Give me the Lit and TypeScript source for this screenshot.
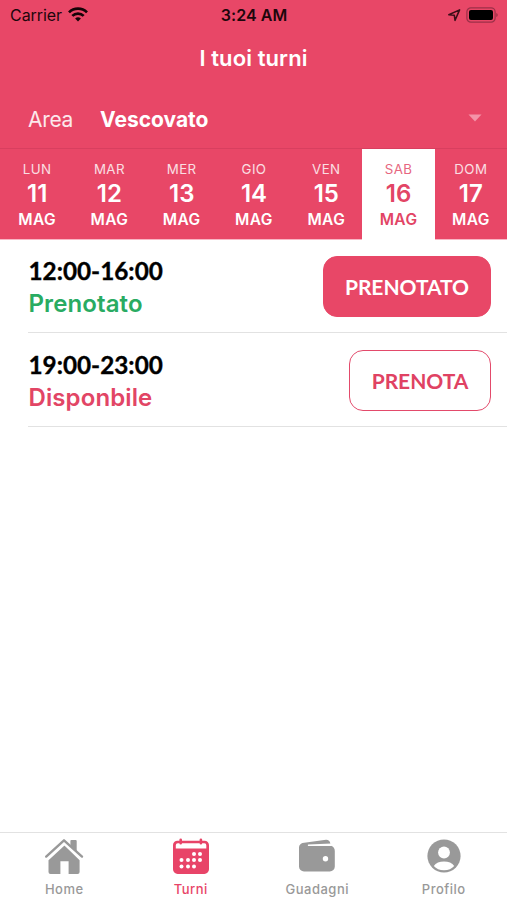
import { LitElement, html, css, svg } from "lit";
import { customElement, property } from "lit/decorators.js";
import { classMap } from "lit/directives/class-map.js";

const days = [
  { name: "LUN", num: 11 },
  { name: "MAR", num: 12 },
  { name: "MER", num: 13 },
  { name: "GIO", num: 14 },
  { name: "VEN", num: 15 },
  { name: "SAB", num: 16, selected: true },
  { name: "DOM", num: 17 },
];

const shifts = [
  { time: "12:00-16:00", status: "Prenotato", booked: true, action: "PRENOTATO" },
  { time: "19:00-23:00", status: "Disponbile", booked: false, action: "PRENOTA" },
];

const dots = [
  [23, 15], [29, 15],
  [10.5, 21], [17, 21], [23, 21], [29, 21],
  [10.5, 27.5], [17, 27.5], [23, 27.5],
];

const icons = {
  home: svg`
    <path d="M3.5 21.2 19.5 6.4 34.6 21.2V32.9a2 2 0 0 1-2 2H23.6V22.3H15.4V34.9H5.5a2 2 0 0 1-2-2Z"/>
    <path d="M.9 17.9 18.9 1.5 37 17.9" fill="none" stroke="#fff" stroke-width="3.6" transform="translate(0 2)"/>
    <path d="M1.2 17.6 19 1.3 37 17.6" fill="none" stroke="currentColor" stroke-width="2.4" stroke-linecap="round" stroke-linejoin="round"/>
    <path d="M25.4 2.1a1 1 0 0 1 1-1H30.7a1 1 0 0 1 1 1V12.5L25.4 7Z"/>`,
  calendar: svg`
    <path fill-rule="evenodd" d="M6 1.7H7.4V.7a1.3 1.3 0 0 1 2.6 0v1H27.6V.7a1.3 1.3 0 0 1 2.6 0v1H32.6A4.4 4.4 0 0 1 37 6.1V30.3a4.6 4.6 0 0 1-4.6 4.6H5.6A4.6 4.6 0 0 1 1 30.3V6.1A4.4 4.4 0 0 1 6 1.7ZM5.8 4.3A2 2 0 0 0 3.8 6.3V9.5H34.3V6.3A2 2 0 0 0 32.3 4.3H30.2a1.3 1.3 0 0 1-2.6 0H10a1.3 1.3 0 0 1-2.6 0Z"/>
    ${dots.map(([x, y]) => svg`<circle cx=${x - 1} cy=${y} r="2" fill="#fff"/>`)}`,
  wallet: svg`
    <path d="M1 8.5A5 5 0 0 1 4.4 4.1L28 .7A4 4 0 0 1 32.3 4.6L33 6.8A5.5 5.5 0 0 1 36.8 12V27.4A5 5 0 0 1 31.8 32.4H6A5 5 0 0 1 1 27.4Z"/>
    <path d="M10.2 5.4 33.6 4.5V6.9H11.2A.9.9 0 0 1 10.2 5.4Z" fill="#fff"/>
    <circle cx="27.5" cy="19.8" r="2.7" fill="#fff"/>`,
  profile: svg`
    <circle cx="19" cy="17" r="16.6"/>
    <circle cx="19" cy="13.5" r="5.9" fill="#fff"/>
    <path d="M8.8 27C10.7 23.8 14.6 22.4 19 22.4S27.3 23.8 29.2 27C26.8 29.7 23.4 31.3 19 31.3S11.2 29.7 8.8 27Z" fill="#fff"/>`,
};

const tabs = [
  { label: "Home", icon: icons.home },
  { label: "Turni", icon: icons.calendar, active: true },
  { label: "Guadagni", icon: icons.wallet },
  { label: "Profilo", icon: icons.profile },
];

@customElement("status-bar")
class StatusBar extends LitElement {
  static styles = css`
    :host {
      display: grid;
      grid-template-columns: 1fr auto 1fr;
      align-items: center;
      height: 29px;
      padding: 0 9px 0 10px;
      box-sizing: border-box;
      color: #1d060b;
      font-size: 16px;
    }
    .left, .right { display: flex; align-items: center; }
    .left { gap: 6px; letter-spacing: -0.05px; }
    .right { justify-content: flex-end; gap: 5px; }
    .clock { font-weight: 600; letter-spacing: 0.05px; }
    svg { display: block; }
  `;
  render() {
    return html`
      <div class="left">
        <span>Carrier</span>
        <svg width="20" height="15" viewBox="0 0 20 15" fill="none" stroke="#150307" stroke-width="2.7">
          <path d="M1 5.4a12.8 12.8 0 0 1 18 0" />
          <path d="M4.3 8.9a8.2 8.2 0 0 1 11.4 0" />
          <path d="M10 14.4 7.1 11.6a4.2 4.2 0 0 1 5.8 0Z" fill="#150307" stroke="none" />
        </svg>
      </div>
      <span class="clock">3:24 AM</span>
      <div class="right">
        <svg width="14" height="14" viewBox="0 0 14 14">
          <path d="M1.8 6.7 12.6 1.9 8 12.4 7.3 7.2Z" fill="none" stroke="#3a0d17" stroke-width="1.5" stroke-linejoin="round" />
        </svg>
        <svg width="32" height="16" viewBox="0 0 32 16">
          <rect x=".9" y=".8" width="28.2" height="14.4" rx="4" fill="none" stroke="#9c3048" stroke-width="1.2" />
          <rect x="3" y="3" width="24" height="10" rx="2" fill="#000" />
          <path d="M30.4 5.9a2.4 2.4 0 0 1 0 4.2Z" fill="#8f2b40" />
        </svg>
      </div>
    `;
  }
}

@customElement("day-strip")
class DayStrip extends LitElement {
  static styles = css`
    :host {
      display: grid;
      grid-template-columns: repeat(7, 1fr);
      height: 92px;
      box-sizing: border-box;
      border-top: 1px solid #d83f5f;
      border-bottom: 1px solid #f9b6c4;
      padding-left: 1px;
    }
    .day {
      display: flex;
      flex-direction: column;
      align-items: center;
      padding-top: 11px;
      color: #fff;
    }
    .day.selected { background: #fff; color: #e24565; margin-bottom: -1px; }
    .name { font-size: 13.3px; line-height: 19px; letter-spacing: 0.4px; opacity: 0.82; }
    .num { font-size: 24px; line-height: 30px; font-weight: 600; }
    .month { font-size: 15.5px; line-height: 21px; font-weight: 600; letter-spacing: 0.4px; }
  `;
  render() {
    return days.map(
      (d) => html`
        <div class=${classMap({ day: true, selected: !!d.selected })}>
          <span class="name">${d.name}</span>
          <span class="num">${d.num}</span>
          <span class="month">MAG</span>
        </div>
      `
    );
  }
}

@customElement("shift-row")
class ShiftRow extends LitElement {
  @property({ attribute: false }) shift = shifts[0];
  static styles = css`
    :host {
      display: flex;
      align-items: flex-end;
      justify-content: space-between;
      height: 94px;
      box-sizing: border-box;
      margin-left: 28px;
      padding: 0 16px 15px 0;
      border-bottom: 1.5px solid #e2e2e2;
    }
    :host(:first-child) { height: 93px; }
    .text { padding-left: 0.5px; margin-bottom: -3px; }
    .time {
      font: 700 24.3px/32px Lato, sans-serif;
      color: #000;
      -webkit-text-stroke: 0.35px #000;
    }
    .status { font-size: 24px; line-height: 33px; font-weight: 600; color: #e24565; letter-spacing: 0.1px; }
    .status.booked { color: #29ab62; }
    button {
      height: 61px;
      padding: 0;
      width: 142px;
      box-sizing: border-box;
      border: 1.5px solid #e34a6b;
      border-radius: 14px;
      background: #fff;
      color: #e04263;
      font: 700 21px/57px Lato, sans-serif;
      letter-spacing: -0.05px;
    }
    button.booked { width: 168px; background: #e84767; border-color: #e84767; color: #fff; }
  `;
  render() {
    const s = this.shift;
    return html`
      <div class="text">
        <div class="time">${s.time}</div>
        <div class=${classMap({ status: true, booked: s.booked })}>${s.status}</div>
      </div>
      <button class=${classMap({ booked: s.booked })}>${s.action}</button>
    `;
  }
}

@customElement("tab-bar")
class TabBar extends LitElement {
  static styles = css`
    :host {
      display: grid;
      grid-template-columns: repeat(4, 1fr);
      height: 68px;
      box-sizing: border-box;
      border-top: 1.5px solid #e2e2e2;
      padding-left: 1px;
      background: #fff;
    }
    .tab {
      display: flex;
      flex-direction: column;
      align-items: center;
      padding-top: 6px;
      color: #999;
      font-size: 13px;
      font-weight: 500;
      letter-spacing: 0.5px;
      line-height: 18px;
    }
    .tab.active { color: #e84468; }
    svg { display: block; fill: currentColor; margin-bottom: 5px; overflow: visible; }
  `;
  render() {
    return tabs.map(
      (t) => html`
        <div class=${classMap({ tab: true, active: !!t.active })}>
          <svg width="38" height="36" viewBox="0 0 38 36">${t.icon}</svg>
          <span>${t.label}</span>
        </div>
      `
    );
  }
}

@customElement("app-root")
class AppRoot extends LitElement {
  static styles = css`
    :host {
      display: flex;
      flex-direction: column;
      height: 900px;
      background: #fff;
      font-family: Inter, "Liberation Sans", sans-serif;
    }
    header { background: #e84767; }
    h1 {
      margin: 0;
      height: 57px;
      color: #fff;
      font-size: 22px;
      line-height: 58px;
      font-weight: 600;
      text-align: center;
      letter-spacing: 0.1px;
    }
    .area {
      display: flex;
      align-items: center;
      height: 62px;
      padding: 4px 25px 0 28px;
      box-sizing: border-box;
      color: #fff;
      font-size: 21px;
    }
    .label { width: 72px; opacity: 0.88; letter-spacing: -0.3px; }
    .value { flex: 1; font-weight: 700; }
    .area svg { display: block; margin-bottom: 3px; }
    main { flex: 1; }
  `;
  render() {
    return html`
      <header>
        <status-bar></status-bar>
        <h1>I tuoi turni</h1>
        <div class="area">
          <span class="label">Area</span>
          <span class="value">Vescovato</span>
          <svg width="14" height="8" viewBox="0 0 14 8"><path d="M.5.5h13L7 7.5Z" fill="#f493a8" /></svg>
        </div>
        <day-strip></day-strip>
      </header>
      <main>${shifts.map((s) => html`<shift-row .shift=${s}></shift-row>`)}</main>
      <tab-bar></tab-bar>
    `;
  }
}
